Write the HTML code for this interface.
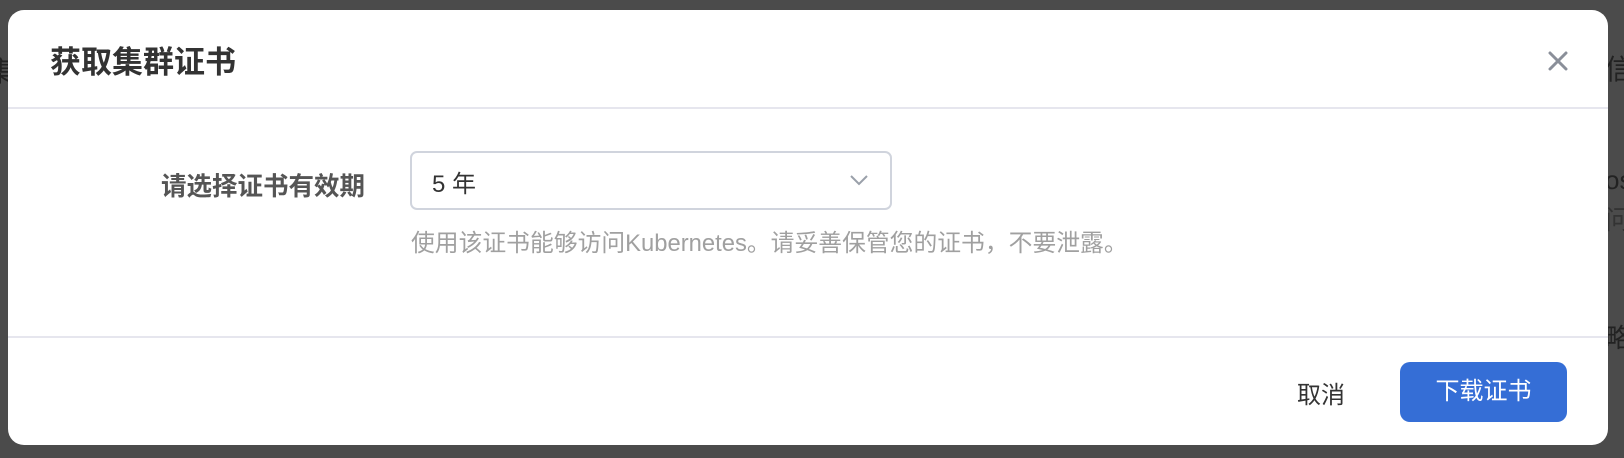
<!DOCTYPE html>
<html><head><meta charset="utf-8"><style>
html,body{margin:0;padding:0;}
body{width:1624px;height:458px;background:#4b4b4b;position:relative;overflow:hidden;font-family:"Liberation Sans","Noto Sans CJK SC",sans-serif;}
.modal{position:absolute;left:8px;top:10px;width:1600px;height:435px;background:#fff;border-radius:16px;}
.t{position:absolute;white-space:nowrap;}
.line{position:absolute;left:0;width:1600px;height:2px;background:#e6e6ee;}
</style></head><body>
<div class="t" style="left:-14px;top:50px;font-size:28px;color:#222;">集</div>
<div class="t" style="left:1605px;top:48px;font-size:28px;color:#222;">信</div>
<div class="t" style="left:1605px;top:165px;font-size:26px;color:#222;">os</div>
<div class="t" style="left:1605px;top:200px;font-size:26px;color:#333;">问</div>
<div class="t" style="left:1605px;top:318px;font-size:26px;color:#222;">略</div>
<div class="modal">
  <div class="t" style="left:42px;top:27px;font-size:31px;font-weight:bold;color:#333;">获取集群证书</div>
  <svg style="position:absolute;left:1540px;top:41px" width="20" height="20" viewBox="0 0 20 20"><path d="M2 2L18 18M18 2L2 18" stroke="#8a8f99" stroke-width="3" stroke-linecap="round"/></svg>
  <div class="line" style="top:97px;"></div>
  <div class="t" style="left:153px;top:156px;font-size:25.5px;font-weight:bold;color:#555;">请选择证书有效期</div>
  <div style="position:absolute;left:402px;top:141px;width:478px;height:55px;border:2px solid #d0d4dd;border-radius:7px;"></div>
  <div class="t" style="left:424px;top:154px;font-size:24px;color:#333;">5 年</div>
  <svg style="position:absolute;left:841px;top:164px" width="20" height="12" viewBox="0 0 20 12"><path d="M2 2L10 10L18 2" stroke="#9aa0aa" stroke-width="2" fill="none"/></svg>
  <div class="t" style="left:403px;top:213px;font-size:23.8px;color:#a0a0a0;">使用该证书能够访问Kubernetes。请妥善保管您的证书，不要泄露。</div>
  <div class="line" style="top:326px;"></div>
  <div class="t" style="left:1289px;top:365px;font-size:24px;color:#333;">取消</div>
  <div style="position:absolute;left:1392px;top:352px;width:167px;height:60px;background:#356ed6;border-radius:10px;color:#fff;font-size:24px;line-height:60px;text-align:center;">下载证书</div>
</div>
</body></html>
